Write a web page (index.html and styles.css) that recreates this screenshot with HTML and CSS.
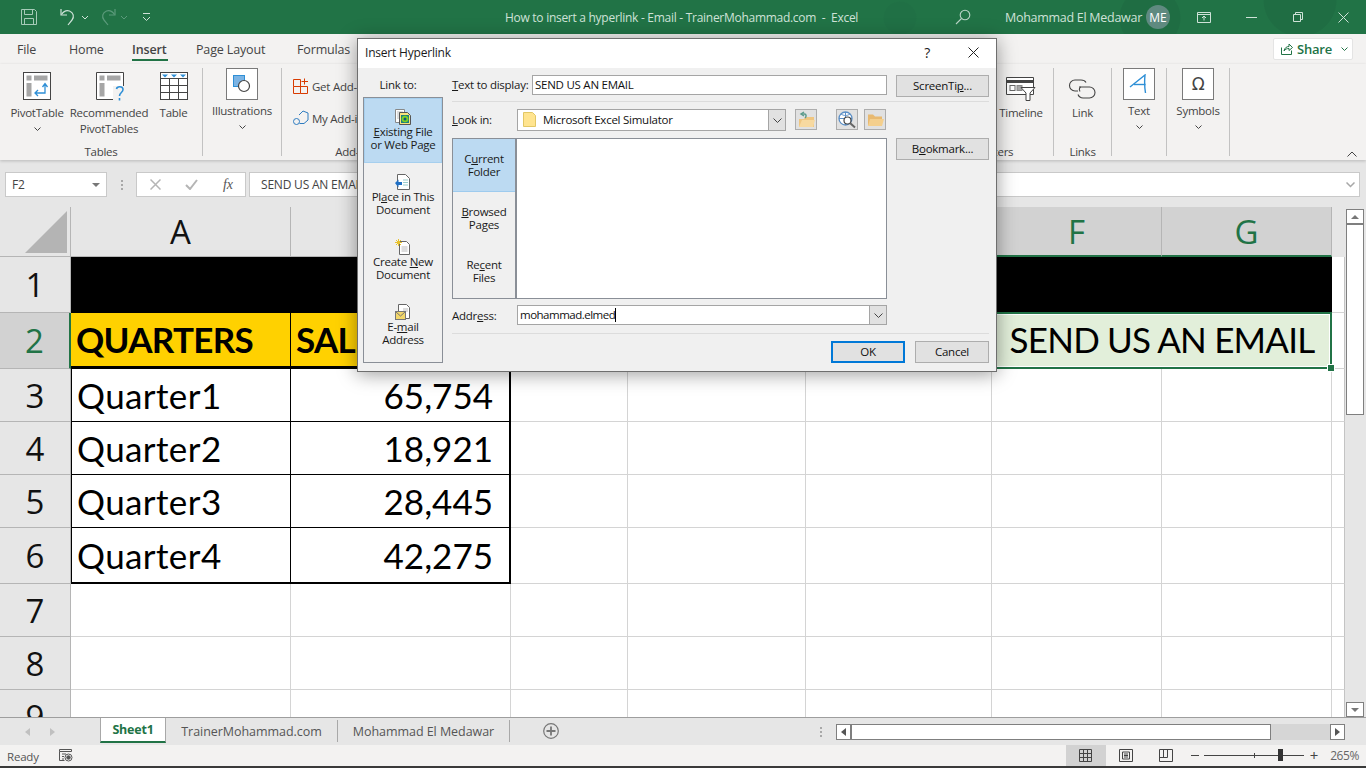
FILE: index.html
```html
<!DOCTYPE html>
<html lang="en">
<head>
  <meta charset="UTF-8">
  <title>How to insert a hyperlink - Email - TrainerMohammad.com - Excel</title>
  <meta name="viewport" content="width=device-width, initial-scale=1">
  <link rel="stylesheet" href="styles.css">
</head>
<body>
<div class="app">

  <!-- title bar -->
  <header class="titlebar">
    <div class="qat">
      <svg class="qat-save" width="18" height="18" viewBox="0 0 18 18" fill="none" stroke="#a6cbb8"><path d="M1.5 1.5h13l2 2v13h-15z"/><path d="M4.5 1.5v5h8v-5M4.5 16.5v-6h9v6"/></svg>
      <svg class="qat-undo" width="16" height="18" viewBox="0 0 16 18" fill="none" stroke="#cfe2d8" stroke-width="1.2"><path d="M1 1v6h6"/><path d="M1.5 6.5c2-3 5-4.500 8-3.500 4 1.500 5 6 2.500 9l-4 5"/></svg>
      <svg class="qat-caret" width="8" height="5" viewBox="0 0 8 5" fill="none" stroke="#cfe2d8"><path d="M1 1l3 3 3-3"/></svg>
      <svg class="qat-redo" width="16" height="18" viewBox="0 0 16 18" fill="none" stroke="#5b9a7b" stroke-width="1.2"><path d="M15 1v6H9"/><path d="M14.500 6.500c-2-3-5-4.500-8-3.500-4 1.500-5 6-2.500 9l4 5"/></svg>
      <svg class="qat-caret2" width="8" height="5" viewBox="0 0 8 5" fill="none" stroke="#5b9a7b"><path d="M1 1l3 3 3-3"/></svg>
      <svg class="qat-more" width="9" height="10" viewBox="0 0 9 10" fill="none" stroke="#cfe2d8"><path d="M1 1.500h7"/><path d="M1 5l3.500 3.500L8 5"/></svg>
    </div>
    <div class="doc-title">How to insert a hyperlink - Email - TrainerMohammad.com &nbsp;- &nbsp;Excel</div>
    <svg class="search-icon" width="16" height="16" viewBox="0 0 16 16" fill="none" stroke="#b9d4c6" stroke-width="1.1"><circle cx="10" cy="6" r="4.800"/><path d="M6.500 9.500L1 15"/></svg>
    <div class="user-name">Mohammad El Medawar</div>
    <div class="avatar">ME</div>
    <div class="win-controls">
      <svg width="14" height="11" viewBox="0 0 14 11" fill="none" stroke="#cfe2d8"><path d="M.5.500h13v10H.5zM.5 2.500h13"/><path d="M7 8.500V4.500M5 6l2-2 2 2"/></svg>
      <svg width="11" height="1" viewBox="0 0 11 1" stroke="#cfe2d8"><path d="M0 .5h11"/></svg>
      <svg width="10" height="10" viewBox="0 0 10 10" fill="none" stroke="#cfe2d8"><path d="M.5 2.500h7v7h-7zM2.500 2.500v-2h7v7h-2"/></svg>
      <svg width="11" height="11" viewBox="0 0 11 11" stroke="#cfe2d8"><path d="M.5.500l10 10M10.500.500l-10 10"/></svg>
    </div>
  </header>

  <!-- ribbon tabs -->
  <nav class="tabs">
    <span class="tab tab-file">File</span>
    <span class="tab tab-home">Home</span>
    <span class="tab tab-insert">Insert</span>
    <span class="tab tab-layout">Page Layout</span>
    <span class="tab tab-formulas">Formulas</span>
    <div class="share">
      <svg width="12" height="12" viewBox="0 0 12 12" fill="none" stroke="#217346"><path d="M.5 4.500v7h10v-4"/><path d="M3 8c.5-3 2.500-4.500 5-4.500V1l3.500 3.500L8 7.500V5.500C6 5.500 4.500 6 3 8z"/></svg>
      <span class="share-text">Share</span>
      <svg class="share-caret" width="7" height="4" viewBox="0 0 7 4" fill="none" stroke="#217346"><path d="M.5.500l3 3 3-3"/></svg>
    </div>
  </nav>

  <!-- ribbon -->
  <section class="ribbon">
    <div class="group group-tables">
      <div class="group-body">
        <div class="big big-pivot">
          <svg width="28" height="28" viewBox="0 0 28 28" fill="none"><rect x=".5" y=".5" width="27" height="27" fill="#fff" stroke="#444"/><rect x="3.500" y="3.500" width="5" height="5" fill="#a6a6a6"/><rect x="11" y="3.500" width="13.500" height="5" fill="#a6a6a6"/><rect x="3.500" y="11" width="5" height="13.500" fill="#a6a6a6"/><path d="M12 21h10v-9M19.500 15l2.500-3.500 2.500 3.500M15 18l-3 3 3 3" stroke="#2e8fd6" stroke-width="1.300"/></svg>
          <span>PivotTable</span>
          <svg class="caret" width="7" height="4" viewBox="0 0 7 4" fill="none" stroke="#444"><path d="M.5.500l3 3 3-3"/></svg>
        </div>
        <div class="big big-rec">
          <svg width="30" height="30" viewBox="0 0 30 30" fill="none"><path d="M.5.500h27v27H.5z" fill="#fff" stroke="#444"/><rect x="3.500" y="3.500" width="5" height="5" fill="#a6a6a6"/><rect x="11" y="3.500" width="13.500" height="5" fill="#a6a6a6"/><rect x="3.500" y="11" width="5" height="13.500" fill="#a6a6a6"/><path d="M17 14h11v16H17z" fill="#f3f2f1"/><path d="M20.500 17c.5-3 6.500-3 6.500.5 0 3-3.500 3-3.500 6.500M23.500 26v2.500" stroke="#2e8fd6" stroke-width="1.600"/></svg>
          <span>Recommended<br>PivotTables</span>
        </div>
        <div class="big big-table">
          <svg width="28" height="28" viewBox="0 0 28 28" fill="none"><rect x=".5" y=".5" width="27" height="27" fill="#fff" stroke="#444"/><path d="M.5 6.500h27M.5 13.500h27M.5 20.500h27M9.500 6.500v21M18.500 6.500v21" stroke="#444"/><path d="M2 2.500h6l-3 3zM11 2.500h6l-3 3zM20 2.500h6l-3 3z" fill="#2e8fd6"/></svg>
          <span>Table</span>
        </div>
      </div>
      <div class="group-label">Tables</div>
    </div>

    <div class="group group-illus">
      <div class="group-body">
        <div class="big big-boxed">
          <div class="icon-box"><svg width="18" height="18" viewBox="0 0 18 18" fill="none"><rect x=".5" y=".5" width="11" height="11" fill="#7cb4e4" stroke="#2e8fd6"/><circle cx="11" cy="11" r="5.500" fill="#fff" stroke="#444" stroke-width="1.200"/></svg></div>
          <span>Illustrations</span>
          <svg class="caret" width="7" height="4" viewBox="0 0 7 4" fill="none" stroke="#444"><path d="M.5.500l3 3 3-3"/></svg>
        </div>
      </div>
    </div>

    <div class="group group-addins">
      <div class="addin-list">
        <div class="addin">
          <svg width="16" height="16" viewBox="0 0 16 16" fill="none" stroke="#d83b01"><path d="M.5 1.500h7v14h7V8.500H.5v7h7"/><path d="M.5 1.500v7"/><path d="M11.500.5v6M8.500 3.500h6.500"/></svg>
          <span>Get Add-ins</span>
        </div>
        <div class="addin">
          <svg width="16" height="16" viewBox="0 0 16 16" fill="none" stroke="#2e7cc0"><path d="M6 5l4-4 5 2v7l-4 3.500H6.500"/><circle cx="3.500" cy="11.500" r="3"/></svg>
          <span>My Add-ins</span>
        </div>
      </div>
      <div class="group-label group-label-addins">Add-ins</div>
    </div>

    <div class="group group-filters">
      <div class="group-body">
        <div class="big big-timeline">
          <svg width="30" height="24" viewBox="0 0 30 24" fill="none"><path d="M.5.500h27v17H.5z" fill="#fff" stroke="#444"/><path d="M.5 4.500h27" stroke="#444" stroke-width="3"/><rect x="4" y="8.500" width="5" height="5" stroke="#666"/><rect x="11" y="8.500" width="5" height="5" fill="#a6a6a6" stroke="#888"/><path d="M15 10.500h14l-5 5.500v7.500h-4V16z" fill="#fff" stroke="#444"/></svg>
          <span>Timeline</span>
        </div>
      </div>
      <div class="group-label group-label-filters">Filters</div>
    </div>

    <div class="group group-links">
      <div class="group-body">
        <div class="big big-link">
          <svg width="29" height="20" viewBox="0 0 29 20" fill="none" stroke="#444" stroke-width="1.100"><path d="M18 3.500C17 1.500 15 1 13 1H7a5.500 5.500 0 0 0 0 11h3"/><path d="M11 8h10.500a5.500 5.500 0 0 1 0 11H15a5.500 5.500 0 0 1-5-3.500"/><path d="M12 12.500c-1.500-2.500 0-4.500 1-4.500"/></svg>
          <span>Link</span>
        </div>
      </div>
      <div class="group-label">Links</div>
    </div>

    <div class="group group-text">
      <div class="group-body">
        <div class="big big-boxed">
          <div class="icon-box"><svg width="20" height="20" viewBox="0 0 20 20" fill="none" stroke="#2e8fd6" stroke-width="1.400"><path d="M1 13L16 1c-.5 5-.5 12 .5 18"/><path d="M5 10.500h11.500"/></svg></div>
          <span>Text</span>
          <svg class="caret" width="7" height="4" viewBox="0 0 7 4" fill="none" stroke="#444"><path d="M.5.500l3 3 3-3"/></svg>
        </div>
      </div>
    </div>

    <div class="group group-symbols">
      <div class="group-body">
        <div class="big big-boxed">
          <div class="icon-box"><span class="omega">Ω</span></div>
          <span>Symbols</span>
          <svg class="caret" width="7" height="4" viewBox="0 0 7 4" fill="none" stroke="#444"><path d="M.5.500l3 3 3-3"/></svg>
        </div>
      </div>
    </div>

    <svg class="collapse" width="10" height="6" viewBox="0 0 10 6" fill="none" stroke="#444"><path d="M.5 5.500L5 1l4.500 4.500"/></svg>
  </section>

  <!-- formula bar -->
  <div class="formula-row">
    <div class="name-box"><span>F2</span><i class="tri-down"></i></div>
    <div class="dots"></div>
    <div class="fx-buttons">
      <svg width="11" height="11" viewBox="0 0 11 11" stroke="#b5b5b5" stroke-width="1.500"><path d="M.5.500l10 10M10.500.500l-10 10"/></svg>
      <svg width="13" height="11" viewBox="0 0 13 11" fill="none" stroke="#b5b5b5" stroke-width="2"><path d="M1 6l4 4 7-9"/></svg>
      <span class="fx-label">fx</span>
    </div>
    <div class="formula-input">
      <span>SEND US AN EMAIL</span>
      <svg class="formula-caret" width="9" height="6" viewBox="0 0 9 6" fill="none" stroke="#a8a8a8" stroke-width="1.500"><path d="M.5.500l4 4 4-4"/></svg>
    </div>
  </div>

  <!-- sheet -->
  <div class="sheet-row">
    <div class="grid">
      <div class="corner"><i></i></div>
      <div class="ch">A</div><div class="ch">B</div><div class="ch">C</div><div class="ch">D</div><div class="ch">E</div>
      <div class="ch ch-sel">F</div><div class="ch ch-sel">G</div><div class="ch-rest"></div>

      <div class="rh">1</div>
      <div class="c-black"></div>
      <div class="c c-edge"></div>

      <div class="rh rh-sel">2</div>
      <div class="c c-head">QUARTERS</div>
      <div class="c c-head c-head-b">SALES</div>
      <div class="c"></div><div class="c"></div><div class="c"></div>
      <div class="c-selected">SEND US AN EMAIL<i class="handle"></i></div>
      <div class="c c-edge"></div>

      <div class="rh">3</div><div class="c c-t c-a">Quarter1</div><div class="c c-t c-b">65,754</div>
      <div class="c"></div><div class="c"></div><div class="c"></div><div class="c"></div><div class="c"></div><div class="c c-edge"></div>
      <div class="rh">4</div><div class="c c-t c-a">Quarter2</div><div class="c c-t c-b">18,921</div>
      <div class="c"></div><div class="c"></div><div class="c"></div><div class="c"></div><div class="c"></div><div class="c c-edge"></div>
      <div class="rh">5</div><div class="c c-t c-a">Quarter3</div><div class="c c-t c-b">28,445</div>
      <div class="c"></div><div class="c"></div><div class="c"></div><div class="c"></div><div class="c"></div><div class="c c-edge"></div>
      <div class="rh">6</div><div class="c c-t c-a c-last">Quarter4</div><div class="c c-t c-b c-last">42,275</div>
      <div class="c"></div><div class="c"></div><div class="c"></div><div class="c"></div><div class="c"></div><div class="c c-edge"></div>
      <div class="rh">7</div><div class="c"></div><div class="c"></div>
      <div class="c"></div><div class="c"></div><div class="c"></div><div class="c"></div><div class="c"></div><div class="c c-edge"></div>
      <div class="rh">8</div><div class="c"></div><div class="c"></div>
      <div class="c"></div><div class="c"></div><div class="c"></div><div class="c"></div><div class="c"></div><div class="c c-edge"></div>
      <div class="rh">9</div><div class="c"></div><div class="c"></div>
      <div class="c"></div><div class="c"></div><div class="c"></div><div class="c"></div><div class="c"></div><div class="c c-edge"></div>
    </div>

    <div class="vscroll">
      <div class="vbtn"><i class="tri-up"></i></div>
      <div class="vthumb"></div>
      <div class="vtrack"></div>
      <div class="vbtn"><i class="tri-down-s"></i></div>
    </div>
  </div>

  <!-- sheet tabs -->
  <div class="sheet-tabs">
    <div class="nav-arrows"><i class="tri-l"></i><i class="tri-r"></i></div>
    <div class="stab stab-active">Sheet1</div>
    <div class="stab stab-2">TrainerMohammad.com</div>
    <div class="stab stab-3">Mohammad El Medawar</div>
    <svg class="add-sheet" width="16" height="16" viewBox="0 0 16 16" fill="none" stroke="#777"><circle cx="8" cy="8" r="7.300" stroke-width="1.200"/><path d="M8 3.500v9M3.500 8h9" stroke-width="1.800"/></svg>
    <div class="dots dots-h"></div>
    <div class="hscroll">
      <div class="hbtn"><i class="tri-l tri-dark"></i></div>
      <div class="hthumb"></div>
      <div class="htrack"></div>
      <div class="hbtn"><i class="tri-r tri-dark"></i></div>
    </div>
  </div>

  <!-- status bar -->
  <footer class="status">
    <span class="ready">Ready</span>
    <svg class="macro" width="14" height="13" viewBox="0 0 14 13" fill="none" stroke="#555"><path d="M.5.500h12v2H.5zM.5 2.500v9h5M3 5h4M3 7.500h2M3 10h2"/><circle cx="9.500" cy="8.500" r="3.500" fill="#fff"/><circle cx="9.500" cy="8.500" r="1.800" fill="#555"/></svg>
    <div class="view-btns">
      <div class="view-btn view-on"><svg width="13" height="13" viewBox="0 0 13 13" fill="none" stroke="#444"><path d="M.5.500h12v12H.5zM4.500.500v12M8.500.500v12M.5 4.500h12M.5 8.500h12"/></svg></div>
      <div class="view-btn"><svg width="14" height="13" viewBox="0 0 14 13" fill="none" stroke="#444"><path d="M.5.500h13v12H.5z"/><path d="M3.500 3h7v7h-7zM5 5h4M5 6.500h4M5 8h4"/></svg></div>
      <div class="view-btn"><svg width="14" height="13" viewBox="0 0 14 13" fill="none" stroke="#444"><path d="M.5.500h13v12H.5zM.5 8.500h8v-8M4.500.500v8"/></svg></div>
    </div>
    <div class="zoom">
      <i class="zoom-minus"></i>
      <div class="zoom-track"><i class="zoom-tick"></i><i class="zoom-thumb"></i></div>
      <span class="zoom-plus">+</span>
      <span class="zoom-value">265%</span>
    </div>
  </footer>

  <!-- Insert Hyperlink dialog -->
  <div class="dialog">
    <div class="dlg-title">
      <span>Insert Hyperlink</span>
      <span class="dlg-help">?</span>
      <svg class="dlg-close" width="11" height="11" viewBox="0 0 11 11" stroke="#222"><path d="M.5.500l10 10M10.500.500l-10 10"/></svg>
    </div>
    <div class="dlg-body">
      <div class="linkto">
        <div class="linkto-label">Link to:</div>
        <div class="linkto-box">
          <div class="linkto-item linkto-on">
            <svg width="16" height="16" viewBox="0 0 16 16"><path d="M.5.500h9v13h-9z" fill="#fff" stroke="#888"/><path d="M2 3h6M2 5h6M2 7h6M2 9h6" stroke="#bbb"/><path d="M4.500 3.500h8l3 3v9h-11z" fill="#f7e27c" stroke="#555"/><rect x="6" y="6" width="8" height="8" fill="#1c7f7f"/><circle cx="10" cy="10" r="3.300" fill="#7ed321"/><circle cx="10" cy="10" r="1.500" fill="#14557a"/></svg>
            <span><u>E</u>xisting File<br>or Web Page</span>
          </div>
          <div class="linkto-item">
            <svg width="16" height="16" viewBox="0 0 16 16"><path d="M2.500.500h8l4 4v11h-12z" fill="#fff" stroke="#666"/><path d="M8 6h5M8 8.500h5M8 11h5" stroke="#9cc"/><path d="M0 9l3.500-3.500V8H7v3H3.500v2.500z" fill="#1f6fc4"/></svg>
            <span>Pl<u>a</u>ce in This<br>Document</span>
          </div>
          <div class="linkto-item">
            <svg width="16" height="16" viewBox="0 0 16 16"><path d="M4.500 2.500h7l3 3v10h-10z" fill="#fff" stroke="#666"/><path d="M6.500 8h6M6.500 10h6M6.500 12h6" stroke="#bbb"/><path d="M3.500 0v7M0 3.500h7M1 1l5 5M6 1L1 6" stroke="#e8c22c"/></svg>
            <span>Create <u>N</u>ew<br>Document</span>
          </div>
          <div class="linkto-item">
            <svg width="16" height="16" viewBox="0 0 16 16"><path d="M3.500.500h8l3 3v11h-11z" fill="#fff" stroke="#666"/><path d="M8 5h5M8 7h5" stroke="#bbb"/><rect x=".5" y="7.500" width="10" height="8" fill="#f3d76a" stroke="#777"/><path d="M1 8l4.500 4L10 8" fill="none" stroke="#777"/></svg>
            <span>E-<u>m</u>ail<br>Address</span>
          </div>
        </div>
      </div>

      <div class="dlg-main">
        <div class="dlg-row dlg-row-text">
          <label class="lbl-text"><u>T</u>ext to display:</label>
          <div class="input input-text">SEND US AN EMAIL</div>
          <div class="btn btn-side"><span>ScreenTi<u>p</u>...</span></div>
        </div>
        <div class="dlg-sep"></div>
        <div class="dlg-row dlg-row-look">
          <label class="lbl-left"><u>L</u>ook in:</label>
          <div class="combo combo-look">
            <svg width="13" height="15" viewBox="0 0 13 15"><path d="M.5.500h9l3 3v11H.5z" fill="#ffe48f" stroke="#e2c765"/></svg>
            <span>Microsoft Excel Simulator</span>
            <div class="combo-arrow"><svg width="9" height="5" viewBox="0 0 9 5" fill="none" stroke="#444"><path d="M.5.500l4 4 4-4"/></svg></div>
          </div>
          <div class="tool tool-up"><svg width="17" height="17" viewBox="0 0 17 17"><path d="M1 8h5l1-2h9v10H1z" fill="#f0c680"/><path d="M1 16l3-7h13l-2 7z" fill="#f7d9a0"/><path d="M6 1L3 3l3 2" fill="none" stroke="#5b9a8b" stroke-width="1.500"/><path d="M3.500 3h3c2 0 2 3 .5 4" fill="none" stroke="#5b9a8b" stroke-width="1.500"/></svg></div>
          <div class="tool tool-web"><svg width="18" height="18" viewBox="0 0 18 18" fill="none"><circle cx="7.500" cy="7.500" r="6.500" fill="#fff" stroke="#5b8fc7" stroke-width="1.300"/><path d="M1 7.500h13M7.500 1v13M3 3c3 2 6 2 9 0" stroke="#5b8fc7"/><circle cx="9.500" cy="9.500" r="3.500" fill="#fff" stroke="#444" stroke-width="1.200"/><path d="M12 12l5 4.500" stroke="#666" stroke-width="2"/></svg></div>
          <div class="tool tool-open"><svg width="17" height="15" viewBox="0 0 17 15"><path d="M1 2.500h5l2 2h7v9H1z" fill="#e8b970"/><path d="M1 14l2-7h14l-2 7z" fill="#f4cf8d"/></svg></div>
        </div>
        <div class="dlg-row dlg-row-list">
          <div class="places">
            <div class="place place-on"><span>C<u>u</u>rrent<br>Folder</span></div>
            <div class="place"><span><u>B</u>rowsed<br>Pages</span></div>
            <div class="place"><span>Re<u>c</u>ent<br>Files</span></div>
          </div>
          <div class="file-list"></div>
          <div class="btn btn-side"><span>B<u>o</u>okmark...</span></div>
        </div>
        <div class="dlg-row dlg-row-addr">
          <label class="lbl-left">Addr<u>e</u>ss:</label>
          <div class="combo combo-addr">
            <span class="addr-value">mohammad.elmed</span><i class="text-cursor"></i>
            <div class="combo-arrow"><svg width="9" height="5" viewBox="0 0 9 5" fill="none" stroke="#444"><path d="M.5.500l4 4 4-4"/></svg></div>
          </div>
        </div>
        <div class="dlg-sep dlg-sep-2"></div>
        <div class="dlg-actions">
          <div class="btn btn-ok">OK</div>
          <div class="btn btn-cancel">Cancel</div>
        </div>
      </div>
    </div>
  </div>

</div>
</body>
</html>
```

FILE: styles.css
```css
* {
  box-sizing: border-box;
}
html, body {
  margin: 0;
  padding: 0;
}
body {
  font-family: "Open Sans", "Noto Sans", sans-serif;
  font-size: 12px;
  color: #333;
  background: #f3f2f1;
  overflow: hidden;
}
svg {
  display: block;
  flex: none;
}
.app {
  position: relative;
  width: 1366px;
  height: 768px;
  display: flex;
  flex-direction: column;
  overflow: hidden;
  border-bottom: 2px solid #3a3a3a;
}

/* title bar */
.titlebar {
  height: 34px;
  flex: none;
  display: flex;
  align-items: center;
  color: #cfe2d8;
  letter-spacing: -0.28px;
  background:
    radial-gradient(circle at 1150px 18px, #1f6d43 0, #1f6d43 30px, transparent 31px),
    radial-gradient(circle at 1300px 0, #1f6d43 0, #1f6d43 36px, transparent 37px),
    radial-gradient(circle at 900px 18px, #207045 0, #207045 16px, transparent 17px),
    #217346;
}
.qat {
  width: 505px;
  flex: none;
  display: flex;
  align-items: center;
  padding-left: 20px;
}
.qat-undo { margin-left: 22px; }
.qat-caret { margin-left: 5px; }
.qat-redo { margin-left: 11px; }
.qat-caret2 { margin-left: 4px; }
.qat-more { margin-left: 14px; }
.doc-title {
  width: 450px;
  white-space: nowrap;
}
.search-icon {
  margin-left: 0;
}
.user-name {
  margin-left: 34px;
  width: 141px;
  white-space: nowrap;
  font-size: 12.5px;
}
.avatar {
  width: 24px;
  height: 24px;
  border-radius: 50%;
  background: #5f8a80;
  color: #fff;
  display: flex;
  align-items: center;
  justify-content: center;
  font-size: 12px;
  letter-spacing: 0;
}
.win-controls {
  display: flex;
  align-items: center;
  margin-left: 27px;
}
.win-controls svg:nth-child(2) { margin-left: 35px; }
.win-controls svg:nth-child(3) { margin-left: 36px; }
.win-controls svg:nth-child(4) { margin-left: 35px; }

/* tabs */
.tabs {
  height: 30px;
  flex: none;
  display: flex;
  background: #f3f2f1;
  position: relative;
  font-size: 12.5px;
  letter-spacing: -0.15px;
  color: #444;
}
.tab {
  display: block;
  padding-top: 7px;
  white-space: nowrap;
}
.tab-file { margin-left: 17px; width: 52px; }
.tab-home { width: 63px; }
.tab-insert {
  width: 64px;
  font-weight: 600;
  position: relative;
}
.tab-insert::after {
  content: "";
  position: absolute;
  left: 0;
  top: 25px;
  width: 36px;
  height: 2px;
  background: #217346;
}
.tab-layout { width: 101px; }
.tab-formulas { width: 60px; }
.share {
  margin-left: auto;
  margin-right: 13px;
  margin-top: 4px;
  width: 80px;
  height: 22px;
  background: #fff;
  border: 1px solid #e4e4e4;
  border-radius: 2px;
  display: flex;
  align-items: center;
  padding-left: 7px;
  color: #217346;
  font-size: 13px;
  font-weight: 600;
  letter-spacing: -0.2px;
}
.share-text { margin-left: 4px; }
.share-caret { margin-left: 9px; }

/* ribbon */
.ribbon {
  height: 96px;
  flex: none;
  display: flex;
  position: relative;
  background: #f3f2f1;
  box-shadow: 0 1px 3px rgba(0,0,0,0.2);
  z-index: 1;
  font-size: 11.5px;
  letter-spacing: -0.25px;
  color: #444;
}
.group {
  position: relative;
  flex: none;
  height: 88px;
  margin-top: 4px;
  border-right: 1px solid #c2c2c2;
}
.group-body {
  display: flex;
}
.group-label {
  position: absolute;
  left: 0;
  right: 0;
  top: 76px;
  text-align: center;
  line-height: 16px;
}
.group-tables { width: 203px; padding-left: 10px; }
.group-illus { width: 79px; }
.group-addins { width: 661px; }
.group-filters { width: 111px; }
.group-links { width: 58px; }
.group-text { width: 55px; }
.group-symbols { width: 63px; }
.big {
  display: flex;
  flex-direction: column;
  align-items: center;
  padding-top: 4px;
  line-height: 16px;
  text-align: center;
  white-space: nowrap;
}
.big > span { margin-top: 5px; }
.big .caret { margin-top: 6px; }
.big-pivot { width: 54px; }
.big-rec { width: 90px; }
.big-rec svg { margin-left: 4px; }
.big-rec > span { margin-top: 3px; }
.big-table { width: 39px; }
.big-boxed { width: 100%; padding-top: 0; }
.big-boxed > span { margin-top: 3px; }
.icon-box {
  width: 32px;
  height: 32px;
  border: 1px solid #7a7a7a;
  background: #fff;
  display: flex;
  align-items: center;
  justify-content: center;
}
.omega {
  font-family: "DejaVu Sans", sans-serif;
  font-size: 17px;
  line-height: 1;
  color: #444;
}
.addin-list {
  padding: 10px 0 0 11px;
  display: flex;
  flex-direction: column;
  gap: 16px;
}
.addin {
  display: flex;
  align-items: center;
  gap: 3px;
  height: 16px;
  white-space: nowrap;
}
.group-label-addins {
  left: 0;
  right: auto;
  width: 145px;
}
.group-filters .group-body { justify-content: flex-end; }
.big-timeline { width: 64px; padding-top: 9px; }
.big-timeline > span { margin-top: 4px; }
.big-link { width: 100%; padding-top: 11px; }
.big-link > span { margin-top: 6px; }
.collapse {
  position: absolute;
  left: 1347px;
  top: 87px;
}

/* formula bar */
.formula-row {
  height: 47px;
  flex: none;
  background: #e6e6e6;
  display: flex;
  align-items: flex-start;
  padding: 12px 0 0 5px;
  color: #444;
  font-size: 12px;
  letter-spacing: -0.2px;
}
.name-box {
  width: 102px;
  height: 25px;
  background: #fff;
  border: 1px solid #c9c9c9;
  display: flex;
  align-items: center;
  justify-content: space-between;
  padding: 0 6px;
}
.tri-down {
  width: 0;
  height: 0;
  border: 4px solid transparent;
  border-top: 4px solid #777;
  border-bottom: 0;
}
.dots {
  width: 2px;
  height: 10px;
  margin: 8px 13px 0 14px;
  background: repeating-linear-gradient(#a8a8a8 0 2px, transparent 2px 4px);
}
.fx-buttons {
  width: 110px;
  height: 25px;
  background: #fff;
  border: 1px solid #c9c9c9;
  display: flex;
  align-items: center;
  padding-left: 13px;
  gap: 24px;
}
.fx-label {
  font-family: "Liberation Serif", serif;
  font-style: italic;
  font-size: 14px;
  color: #555;
  margin-left: 1px;
}
.formula-input {
  width: 1111px;
  height: 25px;
  margin-left: 3px;
  background: #fff;
  border: 1px solid #c9c9c9;
  display: flex;
  align-items: center;
  justify-content: space-between;
  padding: 0 4px 0 11px;
}

/* sheet */
.sheet-row {
  height: 510px;
  flex: none;
  display: flex;
  background: #e6e6e6;
}
.grid {
  width: 1345px;
  height: 510px;
  overflow: hidden;
  display: grid;
  grid-template-columns: 71px 220px 220px 117px 178px 186px 170px 170px 13px;
  grid-template-rows: 50px 56px 56px 53px 53px 53px 56px 53px 53px 53px;
  background: #fff;
  font-family: Lato, "Open Sans", sans-serif;
  font-size: 35px;
  color: #000;
}
.corner {
  background: #e6e6e6;
  border-right: 1px solid #b5b5b5;
  border-bottom: 1px solid #b5b5b5;
  position: relative;
}
.corner i {
  position: absolute;
  right: 3px;
  bottom: 3px;
  width: 42px;
  height: 42px;
  background: #b4b4b4;
  clip-path: polygon(100% 0, 100% 100%, 0 100%);
}
.ch, .rh {
  font-family: "Open Sans", sans-serif;
  font-size: 33px;
  font-weight: 400;
  background: #e6e6e6;
  display: flex;
  align-items: center;
  justify-content: center;
  border-right: 1px solid #b5b5b5;
  border-bottom: 1px solid #b5b5b5;
  color: #111;
}
.ch-sel {
  background: #d2d2d2;
  color: #217346;
  border-bottom: 2px solid #217346;
}
.ch-rest {
  background: #e6e6e6;
}
.rh-sel {
  background: #d2d2d2;
  color: #217346;
  border-right: 2px solid #217346;
}
.c {
  border-right: 1px solid #d4d4d4;
  border-bottom: 1px solid #d4d4d4;
  display: flex;
  align-items: center;
  padding: 0 5px;
  white-space: nowrap;
  overflow: hidden;
}
.c-edge {
  border-right: 1px solid #c4c4c4;
}
.c-black {
  grid-column: span 7;
  background: #000;
}
.c-head {
  background: #ffd100;
  font-weight: 700;
  letter-spacing: -0.7px;
  padding-bottom: 1px;
  border-right: 1px solid #000;
  border-bottom: 3px solid #000;
}
.c-head-b {
  border-right: 2px solid #000;
}
.c-t {
  border-bottom: 1px solid #000;
  letter-spacing: 0.4px;
}
.c-a {
  border-left: 1px solid #000;
  border-right: 1px solid #000;
}
.c-b {
  justify-content: flex-end;
  border-right: 2px solid #000;
  padding-right: 16px;
  letter-spacing: 0;
}
.c-last {
  border-bottom: 2px solid #000;
}
.c-selected {
  grid-column: span 2;
  position: relative;
  margin-top: -1px;
  padding-bottom: 3px;
  background: #e2efda;
  border: 2px solid #217346;
  box-shadow: inset 0 0 0 1px #fff;
  display: flex;
  align-items: center;
  justify-content: center;
  white-space: nowrap;
  letter-spacing: -0.8px;
  z-index: 1;
}
.handle {
  position: absolute;
  right: -4px;
  bottom: -4px;
  width: 6px;
  height: 6px;
  background: #217346;
  outline: 1px solid #fff;
}
.vscroll {
  width: 21px;
  padding: 2px 2px 0 1px;
  display: flex;
  flex-direction: column;
}
.vbtn {
  height: 15px;
  background: #fff;
  border: 1px solid #7f7f7f;
  display: flex;
  align-items: center;
  justify-content: center;
  flex: none;
}
.vthumb {
  height: 191px;
  background: #fff;
  border: 1px solid #7f7f7f;
  flex: none;
}
.vtrack {
  flex: 1;
  background: #e6e6e6;
}
.tri-up {
  width: 0;
  height: 0;
  border: 4px solid transparent;
  border-bottom: 4px solid #777;
  border-top: 0;
}
.tri-down-s {
  width: 0;
  height: 0;
  border: 4px solid transparent;
  border-top: 4px solid #777;
  border-bottom: 0;
}

/* sheet tabs */
.sheet-tabs {
  height: 28px;
  flex: none;
  display: flex;
  align-items: flex-start;
  background: #e6e6e6;
  border-top: 1px solid #9e9e9e;
  font-size: 12.5px;
  letter-spacing: -0.05px;
  color: #555;
  position: relative;
  z-index: 1;
}
.nav-arrows {
  width: 100px;
  height: 27px;
  display: flex;
  align-items: center;
  padding-left: 25px;
  gap: 20px;
}
.tri-l, .tri-r {
  width: 0;
  height: 0;
  border: 4px solid transparent;
}
.tri-l {
  border-right: 5px solid #c0c0c0;
  border-left: 0;
}
.tri-r {
  border-left: 5px solid #c0c0c0;
  border-right: 0;
}
.tri-dark.tri-l { border-right-color: #555; }
.tri-dark.tri-r { border-left-color: #555; }
.stab {
  height: 22px;
  margin-top: 2px;
  display: flex;
  align-items: center;
  justify-content: center;
  white-space: nowrap;
  border-right: 1px solid #a8a8a8;
}
.stab-active {
  width: 66px;
  height: 25px;
  margin-top: 0;
  background: #fff;
  border-left: 1px solid #a8a8a8;
  border-right: 1px solid #a8a8a8;
  border-bottom: 2px solid #217346;
  color: #217346;
  font-weight: 700;
  letter-spacing: -0.2px;
}
.stab-2 { width: 172px; }
.stab-3 { width: 172px; }
.add-sheet {
  margin: 5px 0 0 33px;
}
.dots-h {
  margin: 9px 0 0 261px;
}
.hscroll {
  margin: 6px 0 0 14px;
  width: 509px;
  height: 16px;
  display: flex;
}
.hbtn {
  width: 15px;
  background: #fff;
  border: 1px solid #7f7f7f;
  display: flex;
  align-items: center;
  justify-content: center;
  flex: none;
}
.hthumb {
  width: 420px;
  background: #fff;
  border: 1px solid #7f7f7f;
  flex: none;
}
.htrack {
  flex: 1;
  background: #d6d6d6;
}

/* status bar */
.status {
  flex: 1;
  display: flex;
  align-items: center;
  background: #f3f2f1;
  font-size: 11.5px;
  letter-spacing: -0.2px;
  color: #555;
  padding-left: 7px;
}
.ready { padding-top: 2px; }
.macro { margin-left: 20px; }
.view-btns {
  display: flex;
  margin-left: 993px;
  height: 100%;
}
.view-btn {
  width: 40px;
  display: flex;
  align-items: center;
  justify-content: center;
}
.view-on { background: #d2d2d2; }
.zoom {
  display: flex;
  align-items: center;
  margin-left: 5px;
}
.zoom-minus {
  width: 8px;
  height: 1px;
  background: #444;
}
.zoom-track {
  position: relative;
  width: 100px;
  height: 1px;
  margin-left: 5px;
  background: #444;
}
.zoom-tick {
  position: absolute;
  left: 50px;
  top: -2px;
  width: 1px;
  height: 5px;
  background: #444;
}
.zoom-thumb {
  position: absolute;
  left: 74px;
  top: -6px;
  width: 5px;
  height: 12px;
  background: #333;
}
.zoom-plus {
  margin-left: 6px;
  font-size: 15px;
  color: #444;
  line-height: 1;
}
.zoom-value {
  margin-left: 12px;
  font-size: 12px;
  letter-spacing: -0.4px;
  color: #666;
}

/* dialog */
.dialog {
  position: absolute;
  left: 357px;
  top: 38px;
  width: 640px;
  height: 334px;
  z-index: 5;
  background: #f0f0f0;
  border: 1px solid #6e6e6e;
  box-shadow: 0 2px 18px rgba(0,0,0,0.4);
  color: #1a1a1a;
  font-size: 11.5px;
  letter-spacing: -0.25px;
  display: flex;
  flex-direction: column;
}
.dlg-title {
  height: 29px;
  flex: none;
  background: #fff;
  display: flex;
  align-items: center;
  padding: 0 0 2px 7px;
  font-size: 12px;
  letter-spacing: -0.2px;
  position: relative;
}
.dlg-help {
  margin-left: auto;
  margin-right: 38px;
  font-size: 14px;
}
.dlg-close {
  margin-right: 17px;
}
.dlg-body {
  flex: 1;
  display: flex;
}
.linkto {
  width: 94px;
  flex: none;
  padding-left: 5px;
}
.linkto-label {
  height: 29px;
  line-height: 16px;
  padding: 9px 10px 0 0;
  text-align: center;
  width: 80px;
}
.linkto-box {
  width: 80px;
  height: 266px;
  border: 1px solid #8a8f97;
  display: flex;
  flex-direction: column;
}
.linkto-item {
  height: 65px;
  flex: none;
  display: flex;
  flex-direction: column;
  align-items: center;
  text-align: center;
  line-height: 13px;
  padding-top: 11px;
  white-space: nowrap;
}
.linkto-on {
  background: #bcdaf2;
  border: 1px solid #a6cfee;
  padding-top: 10px;
}
.dlg-main {
  width: 537px;
  flex: none;
  padding-top: 7px;
  display: flex;
  flex-direction: column;
}
.dlg-row {
  display: flex;
  align-items: flex-start;
}
.dlg-row-text { height: 26px; }
.dlg-row-look { height: 29px; margin-top: 7px; }
.dlg-row-list { height: 161px; }
.dlg-row-addr { height: 20px; margin-top: 6px; }
.dlg-sep {
  height: 1px;
  background: #dcdcdc;
}
.dlg-sep-2 { margin-top: 8px; }
.lbl-text {
  width: 80px;
  line-height: 20px;
  white-space: nowrap;
}
.lbl-left {
  width: 65px;
  line-height: 21px;
}
.input, .combo {
  height: 20px;
  background: #fff;
  border: 1px solid #a5a5a5;
  display: flex;
  align-items: center;
  padding: 0 0 1px 2px;
  color: #111;
}
.input-text {
  width: 355px;
}
.combo {
  position: relative;
}
.combo-look {
  width: 269px;
  height: 22px;
  padding-left: 5px;
  gap: 7px;
}
.combo-addr {
  width: 370px;
}
.combo-arrow {
  position: absolute;
  right: 0;
  top: 0;
  bottom: 0;
  width: 17px;
  background: #e1e1e1;
  border-left: 1px solid #a5a5a5;
  display: flex;
  align-items: center;
  justify-content: center;
}
.addr-value { letter-spacing: -0.5px; }
.text-cursor {
  width: 1px;
  height: 14px;
  background: #000;
}
.btn {
  height: 22px;
  background: #e1e1e1;
  border: 1px solid #adadad;
  display: flex;
  align-items: center;
  justify-content: center;
  padding-bottom: 1px;
  color: #111;
  white-space: nowrap;
}
.btn-side {
  width: 93px;
  margin-left: 9px;
}
.tool {
  width: 22px;
  height: 21px;
  background: #e1e1e1;
  border: 1px solid #adadad;
  display: flex;
  align-items: center;
  justify-content: center;
}
.tool-up { margin-left: 9px; }
.tool-web { margin-left: 19px; }
.tool-open { margin-left: 6px; }
.places {
  width: 65px;
  height: 161px;
  background: #f0f0f0;
  border: 1px solid #8a8f97;
  border-right-width: 2px;
  flex: none;
}
.place {
  height: 53px;
  display: flex;
  align-items: center;
  justify-content: center;
  text-align: center;
  line-height: 13px;
  padding-bottom: 2px;
}
.place-on {
  background: #bcdaf2;
  border-bottom: 1px solid #9ecbee;
  padding-bottom: 0;
}
.file-list {
  width: 370px;
  height: 161px;
  background: #fff;
  border: 1px solid #8a8f97;
  border-left: 0;
}
.dlg-actions {
  display: flex;
  justify-content: flex-end;
  gap: 10px;
  margin-top: 7px;
}
.btn-ok {
  width: 74px;
  border: 2px solid #0078d7;
}
.btn-cancel {
  width: 74px;
}
```
